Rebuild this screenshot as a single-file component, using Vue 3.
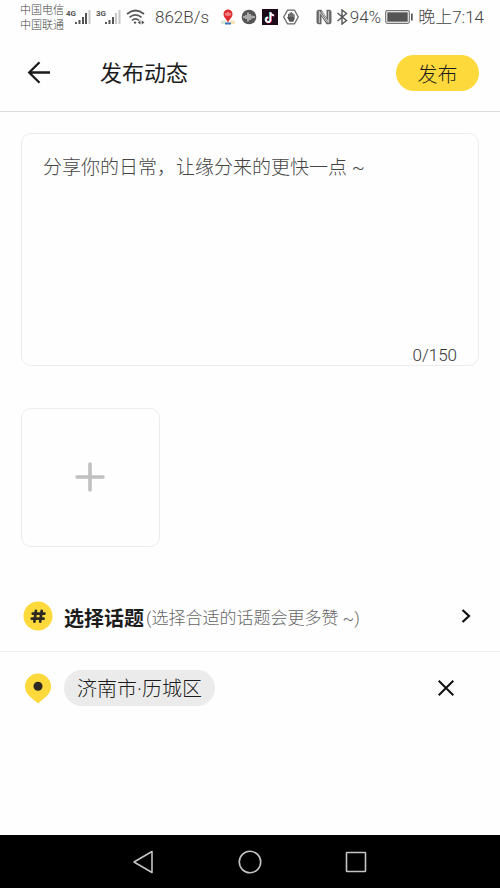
<script setup>
import { ref } from 'vue'

const maxLength = 150
const content = ref('')
const location = ref('济南市·历城区')
</script>

<template>
  <div class="page">
    <div class="status">
      <div class="carriers">
        <span>中国电信</span>
        <span>中国联通</span>
      </div>
      <svg v-for="net in ['4G', '3G']" :key="net" class="signal" width="26" height="18" viewBox="0 0 26 18">
        <text x="0" y="8" class="net">{{ net }}</text>
        <path d="M9 14h2v2H9zM12.500 12h2v4h-2zM16 9h2v7h-2z" fill="#555" />
        <path v-if="net === '4G'" d="M19 5h2v11h-2z" fill="#555" />
        <path v-else d="M19 5h2v11h-2z" fill="#c8c8c8" />
        <path d="M22.500 2h2v14h-2z" fill="#c8c8c8" />
      </svg>
      <svg class="wifi" width="20" height="16" viewBox="0 0 20 16" fill="none" stroke="#555" stroke-width="1.700">
        <path d="M1 5Q9.500-2 18 5M3.500 8.300Q9.500 3.300 15.500 8.300M6 11.300Q9.500 8.300 13 11.300" />
        <circle cx="9" cy="13.600" r="1.200" fill="#555" stroke="none" />
        <path d="M14.500 11.200v4.400l-2.800-2.200zM15.700 11.200v4.400l2.800-2.200z" fill="#555" stroke="none" />
      </svg>
      <span class="speed">862B/s</span>
      <div class="apps">
        <svg width="16" height="16" viewBox="0 0 16 16">
          <path d="M1 12l4-1 3 4H1z" fill="#d6ecd2" /><path d="M9 15l2-4 4 1v3z" fill="#f6e6b5" />
          <path d="M5 14.500h6" stroke="#3976b8" stroke-width="2" />
          <path d="M8 14C7 10.500 3.500 8.500 3.500 5a4.500 4.500 0 0 1 9 0C12.500 8.500 9 10.500 8 14z" fill="#df2d32" />
          <path d="M6 4v2.500M8 3v4M10 4v2.500" stroke="#fff" stroke-width=".8" />
        </svg>
        <svg width="16" height="16" viewBox="0 0 16 16">
          <circle cx="8" cy="8" r="7.300" fill="#555" />
          <path d="M2 8h2M5 6v4M7 3.500v9M9 5v6M11 6.500v3M12 8h2" stroke="#fff" stroke-width="1" />
        </svg>
        <svg width="16" height="16" viewBox="0 0 16 16">
          <path d="M0 0h16v16H0z" fill="#1d0b19" />
          <g fill="none" stroke-width="1.700">
            <path d="M8 3v7.500a2.300 2.300 0 1 1-2.300-2.300M8 3q.5 3 3.500 3" stroke="#27d8d5" />
            <path d="M9 3.700v7.500a2.300 2.300 0 1 1-2.300-2.300M9 3.700q.5 3 3.500 3" stroke="#ed2b58" />
            <path d="M8.500 3.300v7.500a2.300 2.300 0 1 1-2.300-2.300M8.500 3.300q.5 3 3.500 3" stroke="#fff" />
          </g>
        </svg>
        <svg width="16" height="16" viewBox="0 0 16 16">
          <path d="M4.500 1.200h7L15.300 8l-3.800 6.800h-7L.7 8z" fill="none" stroke="#666" stroke-width="1.300" stroke-linejoin="round" />
          <path d="M4 8l1-.3V5h1.400V3.800h1.300v-.6H9v.9h1.300v1.100h1.300V10l-1.300 2.700H6.500z" fill="#555" />
          <path d="M6.400 5v3M7.800 4v4M9.100 4v4M10.400 5v3" stroke="#bbb" stroke-width=".4" />
        </svg>
      </div>
      <div class="right">
        <svg width="16" height="16" viewBox="0 0 16 16">
          <path d="M2.500.8Q.5 1 .5 3v10q0 2 2 2.200h3V7.500l5 7.700h3q2-.2 2-2.200V3q0-2-2-2.200h-3v7.700l-5-7.700z" fill="#666" />
          <path d="M3.300 14V2.500l8 11M12.700 2v11.500L5.500 2.500" fill="none" stroke="#eee" stroke-width=".8" />
        </svg>
        <svg class="bluetooth" width="12" height="16" viewBox="0 0 12 16" fill="none" stroke="#555" stroke-width="1.400">
          <path d="M1.500 4l9 7.500L6 15V1l4.500 3.500-9 7.500" />
        </svg>
        <span class="percent">94%</span>
        <svg class="battery" width="28" height="14" viewBox="0 0 28 14">
          <rect x=".7" y=".7" width="23.600" height="12.600" rx="1.500" fill="none" stroke="#777" stroke-width="1.200" />
          <path d="M2.300 2.300h20.400v9.400H2.300z" fill="#555" />
          <path d="M26 3.500h1.700v7H26z" fill="#555" />
        </svg>
        <span class="time">晚上7:14</span>
      </div>
    </div>

    <header class="header">
      <button class="icon-button" type="button" aria-label="返回">
        <svg width="24" height="24" viewBox="0 0 24 24" fill="none" stroke="#1b1b1b" stroke-width="2.300">
          <path d="M23 11.500H2M12.500 1.300L2.200 11.500l10.300 10.200" />
        </svg>
      </button>
      <h1>发布动态</h1>
      <button class="publish" type="button">发布</button>
    </header>

    <main>
      <div class="editor">
        <textarea
          v-model="content"
          :maxlength="maxLength"
          aria-label="动态内容"
          placeholder="分享你的日常，让缘分来的更快一点 ~"
        ></textarea>
        <span class="count">{{ content.length }}/{{ maxLength }}</span>
      </div>

      <button class="add" type="button" aria-label="添加图片">
        <svg width="31" height="31" viewBox="0 0 31 31" stroke="#c0c0c0" stroke-width="3.600" stroke-linecap="round">
          <path d="M15 2v26M2 15h26" />
        </svg>
      </button>

      <button class="row topic" type="button">
        <svg class="badge" width="30" height="30" viewBox="0 0 30 30">
          <circle cx="15" cy="15" r="14.500" fill="#fdd93c" />
          <path d="M12.900 9.800l-1.500 10.800M18.700 9.800l-1.500 10.800M9.700 12.600h11.800M8.800 17.700h11.800" fill="none" stroke="#2d2922" stroke-width="2.700" stroke-linecap="round" />
        </svg>
        <strong>选择话题</strong>
        <span class="hint">(选择合适的话题会更多赞 ~)</span>
        <svg class="chevron" width="10" height="14" viewBox="0 0 10 14" fill="none" stroke="#111" stroke-width="2.300">
          <path d="M1.500 1l6.500 6-6.500 6" />
        </svg>
      </button>

      <div class="row">
        <svg class="badge" width="30" height="32" viewBox="0 0 30 32">
          <path d="M15 31L6 23.300A12.600 12.600 0 1 1 24 23.300z" fill="#fdd93c" stroke="#fdd93c" stroke-linejoin="round" />
          <circle cx="15" cy="14.300" r="4.500" fill="#2d2922" />
        </svg>
        <button class="place" type="button">{{ location }}</button>
        <button class="icon-button close" type="button" aria-label="清除位置">
          <svg width="16" height="16" viewBox="0 0 16 16" fill="none" stroke="#111" stroke-width="2">
            <path d="M.7.7l14.600 14.600M15.300.7L.7 15.300" />
          </svg>
        </button>
      </div>
    </main>

    <nav class="system">
      <button class="icon-button" type="button" aria-label="后退">
        <svg width="24" height="24" viewBox="0 0 24 24"><path d="M20 1.500v21L2 12z" /></svg>
      </button>
      <button class="icon-button" type="button" aria-label="主屏幕">
        <svg width="24" height="24" viewBox="0 0 24 24"><circle cx="12" cy="12" r="10.700" /></svg>
      </button>
      <button class="icon-button" type="button" aria-label="最近任务">
        <svg width="24" height="24" viewBox="0 0 24 24"><rect x="2.500" y="2.500" width="19" height="19" rx=".5" /></svg>
      </button>
    </nav>
  </div>
</template>

<style>
body {
  margin: 0;
  background: #fefefe;
}
</style>

<style scoped>
.page {
  display: flex;
  flex-direction: column;
  min-height: 100vh;
  background: #fefefe;
  color: #1b1b1b;
  font-family: Roboto, "Noto Sans CJK SC", sans-serif;
  font-weight: 300;
}

.page * {
  box-sizing: border-box;
}

svg {
  display: block;
  flex: none;
}

button {
  margin: 0;
  padding: 0;
  border: 0;
  background: none;
  color: inherit;
  font: inherit;
  cursor: pointer;
}

.icon-button {
  display: flex;
  align-items: center;
  justify-content: center;
}

.status {
  display: flex;
  align-items: center;
  height: 34px;
  padding: 0 16px 0 20px;
  color: #444;
  font-size: 17px;
  white-space: nowrap;
}

.carriers {
  display: flex;
  flex-direction: column;
  width: 46px;
  padding-top: 2px;
  font-size: 11px;
  line-height: 15px;
}

.signal {
  margin-right: 4px;
}

.net {
  fill: #555;
  font-size: 8px;
  font-weight: 700;
}

.speed {
  margin-left: 9px;
}

.apps {
  display: flex;
  gap: 5px;
  margin-left: 11px;
}

.right {
  display: flex;
  align-items: center;
  margin-left: auto;
}

.bluetooth {
  margin-left: 4px;
}

.percent {
  margin-left: 2px;
}

.battery {
  margin: 0 5px 0 4px;
}

.time {
  line-height: 20px;
}

.header {
  display: flex;
  align-items: center;
  height: 78px;
  padding: 0 21px 0 27px;
  border-bottom: 1px solid #dcdcdc;
}

h1 {
  margin: 0 auto 0 49px;
  padding-top: 2px;
  font-size: 22px;
  font-weight: 400;
  line-height: 32px;
}

.publish {
  width: 83px;
  height: 36px;
  padding-top: 1px;
  border-radius: 18px;
  background: #fdd93c;
  font-size: 20px;
}

main {
  flex: 1;
}

.editor {
  display: flex;
  flex-direction: column;
  height: 233px;
  margin: 21px 21px 42px;
  padding: 20px 21px 0;
  border: 1px solid #ececec;
  border-radius: 10px;
}

textarea {
  flex: 1;
  width: 100%;
  padding: 0;
  border: 0;
  outline: 0;
  resize: none;
  background: none;
  color: #1b1b1b;
  font: inherit;
  font-size: 19px;
  line-height: 28px;
}

textarea::placeholder {
  color: #444;
  opacity: 1;
}

.count {
  align-self: flex-end;
  color: #333;
  font-size: 17px;
  line-height: 20px;
}

.add {
  display: flex;
  align-items: center;
  justify-content: center;
  width: 139px;
  height: 139px;
  margin: 0 21px 33px;
  border: 1px solid #ececec;
  border-radius: 10px;
}

.row {
  display: flex;
  align-items: center;
  width: 100%;
  height: 71px;
  padding: 0 29px 0 23px;
  white-space: nowrap;
}

.topic {
  height: 72px;
  border-bottom: 1px solid #f0f0f0;
  text-align: left;
}

.badge {
  margin-right: 11px;
}

strong {
  padding-top: 3px;
  font-size: 20px;
  font-weight: 700;
}

.hint {
  margin-left: 2px;
  padding-top: 2px;
  color: #666;
  font-size: 17px;
}

.chevron {
  margin-left: auto;
}

.place {
  height: 36px;
  padding: 0 13px;
  border-radius: 18px;
  background: #ebebeb;
  font-size: 20px;
}

.close {
  margin: 0 17px 0 auto;
}

.system {
  display: flex;
  align-items: center;
  justify-content: center;
  gap: 82px;
  height: 53px;
  background: #000;
}

.system svg {
  fill: none;
  stroke: #c4c4c4;
  stroke-width: 1.600;
  stroke-linejoin: round;
}
</style>
